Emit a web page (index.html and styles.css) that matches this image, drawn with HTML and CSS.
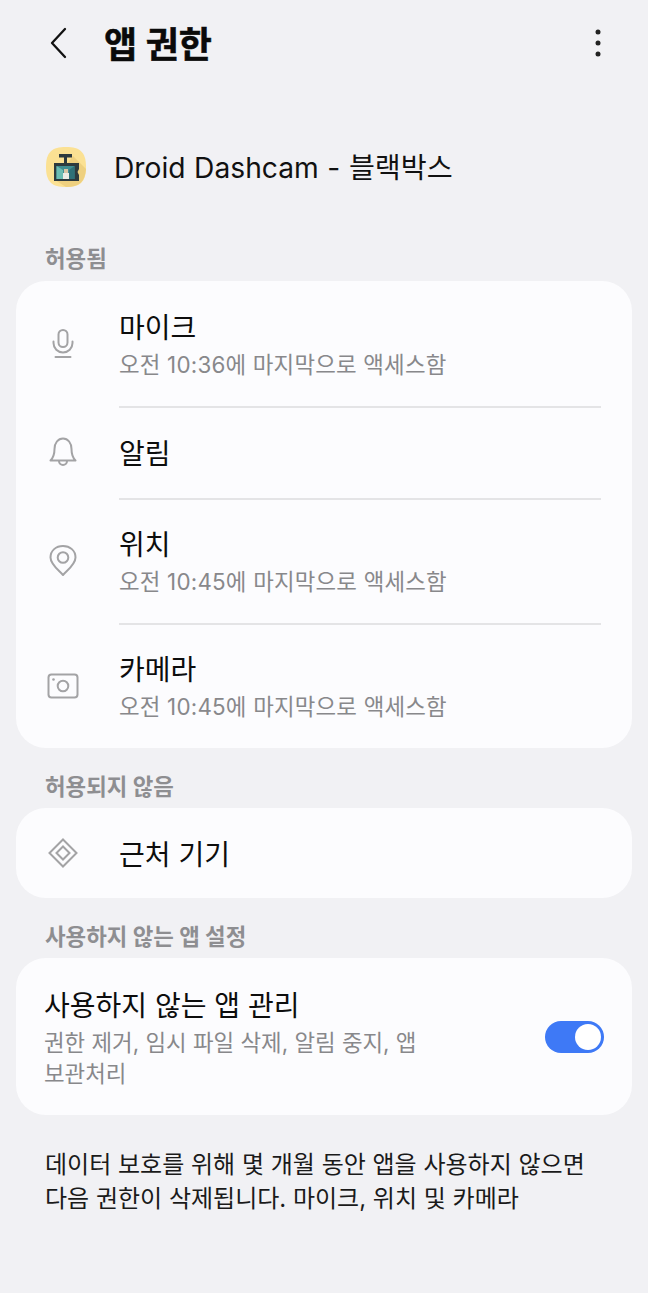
FILE: index.html
```html
<!DOCTYPE html>
<html lang="ko">
<head>
<meta charset="utf-8">
<title>앱 권한</title>
<link rel="stylesheet" href="styles.css">
</head>
<body>
<header class="topbar">
  <svg class="back" width="24" height="34" viewBox="0 0 24 34"><path d="M18 3 L5 17 L18 31" fill="none" stroke="#111" stroke-width="2.300" stroke-linecap="round" stroke-linejoin="round"/></svg>
  <h1 class="title">앱 권한</h1>
  <svg class="more" width="8" height="30" viewBox="0 0 8 30"><circle cx="4" cy="4" r="2.500" fill="#222"/><circle cx="4" cy="15" r="2.500" fill="#222"/><circle cx="4" cy="26" r="2.500" fill="#222"/></svg>
</header>
<div class="app">
  <svg class="app-icon" width="40" height="40" viewBox="0 0 40 40">
    <path d="M20 0 C34 0 40 5 40 20 C40 35 34 40 20 40 C6 40 0 35 0 20 C0 5 6 0 20 0 Z" fill="#fbe193"/>
    <path d="M27 9 L40 22 C39 35 33 40 20 40 L9 33 Z" fill="#eed07f"/>
    <rect x="13" y="7" width="13" height="3.500" fill="#2d3a3e"/>
    <rect x="18" y="10" width="3" height="6" fill="#2d3a3e"/>
    <path d="M8 16 H33 V22 L31.500 25 L33 28 V34 H8 Z" fill="#2d3a3e"/>
    <rect x="10.500" y="19" width="18" height="13" fill="#3f8d92"/>
    <path d="M10.500 19 L17 23 L17 32 L10.500 32 Z" fill="#6bbcb2"/>
    <path d="M28.500 19 L23 23 L23 32 L28.500 32 Z" fill="#2f7077"/>
    <rect x="18" y="22" width="4" height="4" fill="#d8c4a4"/>
    <rect x="17" y="26" width="6" height="6" fill="#ecebe4"/>
  </svg>
  <span class="app-name">Droid Dashcam - 블랙박스</span>
</div>
<h2 class="section first">허용됨</h2>
<section class="card">
  <div class="row tall">
    <svg class="icon" width="32" height="32" viewBox="0 0 32 32"><g fill="none" stroke="#a3a3a5" stroke-width="2" stroke-linecap="round"><rect x="11.500" y="2" width="9" height="17" rx="4.500"/><path d="M6.500 13.500 V15 A9.500 9.500 0 0 0 25.500 15 V13.500"/><path d="M8.500 29 H23.500"/></g></svg>
    <div class="text"><div class="name">마이크</div><div class="sub stamp">오전 10:36에 마지막으로 액세스함</div></div>
  </div>
  <div class="row mid">
    <svg class="icon" width="32" height="32" viewBox="0 0 32 32"><g fill="none" stroke="#a3a3a5" stroke-width="2" stroke-linejoin="round"><path d="M3.500 24.500 C7 21 7.500 18 7.500 13 C7.500 7 11 2.500 16 2.500 C21 2.500 24.500 7 24.500 13 C24.500 18 25 21 28.500 24.500 Z"/><path d="M12 25 A4 4 0 0 0 20 25"/></g></svg>
    <div class="text"><div class="name">알림</div></div>
  </div>
  <div class="row tall">
    <svg class="icon" width="32" height="34" viewBox="0 0 32 34"><g fill="none" stroke="#a3a3a5" stroke-width="2" stroke-linejoin="round"><path d="M16 31 C12 26.500 3.500 20.500 3.500 13.500 C3.500 6.500 9 2 16 2 C23 2 28.500 6.500 28.500 13.500 C28.500 20.500 20 26.500 16 31 Z"/><circle cx="16" cy="13.500" r="5.300"/></g></svg>
    <div class="text"><div class="name">위치</div><div class="sub stamp">오전 10:45에 마지막으로 액세스함</div></div>
  </div>
  <div class="row tall">
    <svg class="icon" width="32" height="26" viewBox="0 0 32 26"><g fill="none" stroke="#a3a3a5" stroke-width="2"><rect x="1.500" y="1.500" width="29" height="23" rx="3"/><circle cx="16" cy="13" r="5.300"/></g><circle cx="6.500" cy="6.500" r="1.300" fill="#a3a3a5"/></svg>
    <div class="text"><div class="name">카메라</div><div class="sub stamp">오전 10:45에 마지막으로 액세스함</div></div>
  </div>
</section>
<h2 class="section">허용되지 않음</h2>
<section class="card">
  <div class="row solo">
    <svg class="icon" width="32" height="32" viewBox="0 0 32 32"><g fill="none" stroke="#a3a3a5" stroke-width="2"><path d="M16 2.500 L29.500 16 L16 29.500 L2.500 16 Z"/><path d="M16 9.500 L22.500 16 L16 22.500 L9.500 16 Z"/></g></svg>
    <div class="text"><div class="name">근처 기기</div></div>
  </div>
</section>
<h2 class="section">사용하지 않는 앱 설정</h2>
<section class="card toggle-card">
  <div class="toggle-text">
    <div class="name">사용하지 않는 앱 관리</div>
    <div class="sub wrap">권한 제거, 임시 파일 삭제, 알림 중지, 앱<br>보관처리</div>
  </div>
  <div class="switch"><span class="knob"></span></div>
</section>
<p class="note">데이터 보호를 위해 몇 개월 동안 앱을 사용하지 않으면<br>다음 권한이 삭제됩니다. 마이크, 위치 및 카메라</p>
</body>
</html>
```
FILE: styles.css
```css
* { box-sizing: border-box; }
html, body { margin: 0; padding: 0; }
body {
  width: 648px;
  height: 1293px;
  overflow: hidden;
  background: #f1f1f4;
  color: #111;
  font-family: "Inter", "Noto Sans CJK KR", "Noto Sans", sans-serif;
}
.topbar {
  height: 86px;
  display: flex;
  align-items: center;
  padding: 0 46px 0 47px;
}
.back { flex: none; }
.title {
  margin: 0 0 0 33px;
  padding-top: 3px;
  font-size: 36px;
  line-height: 44px;
  font-weight: 700;
  color: #0a0a0a;
  -webkit-text-stroke: 0.5px #0a0a0a;
  flex: 1;
}
.app {
  height: 40px;
  margin-top: 61px;
  padding-left: 46px;
  display: flex;
  align-items: center;
}
.app-icon { flex: none; }
.app-name {
  margin-left: 28px;
  font-size: 28.200px;
  line-height: 38px;
  padding-top: 2px;
  word-spacing: 0.700px;
  color: #111;
}
.section {
  margin: 0;
  padding: 14px 0 0 45px;
  height: 60px;
  display: flex;
  align-items: center;
  font-size: 22.400px;
  font-weight: 700;
  color: #8e8e91;
}
.section.first { height: 94px; padding-top: 45px; }
.card {
  margin: 0 16px;
  background: #fcfcfe;
  border-radius: 30px;
}
.row {
  position: relative;
  display: flex;
  align-items: center;
  padding-left: 31px;
}
.row + .row .text::before {
  content: "";
  position: absolute;
  left: 103px;
  right: 31px;
  top: 0;
  height: 2px;
  background: #e4e4e6;
}
.row.tall { height: 125px; }
.row.tall .text { padding-top: 2px; }
.row.mid { height: 92px; }
.row.mid .text, .row.solo .text { padding-top: 4px; }
.row.solo { height: 90px; }
.icon { flex: none; }
.row .icon { margin-right: 40px; }
.text { min-width: 0; }
.name {
  font-size: 28px;
  line-height: 38px;
  color: #0d0d0d;
}
.sub {
  margin-top: 2px;
  font-size: 22.400px;
  line-height: 32px;
  color: #88888b;
}
.stamp { letter-spacing: 0.200px; }
.toggle-card {
  height: 157px;
  padding: 0 28px;
  display: flex;
  align-items: center;
}
.toggle-text { flex: 1; padding-top: 2px; }
.sub.wrap { line-height: 31px; }
.switch {
  flex: none;
  width: 59px;
  height: 32px;
  border-radius: 16px;
  background: #3e79f6;
  display: flex;
  justify-content: flex-end;
  align-items: center;
  padding-right: 3px;
}
.knob {
  width: 26px;
  height: 26px;
  border-radius: 50%;
  background: #fff;
}
.note {
  margin: 33px 0 0;
  padding-left: 45px;
  font-size: 24px;
  line-height: 34px;
  color: #1a1a1a;
}
```
